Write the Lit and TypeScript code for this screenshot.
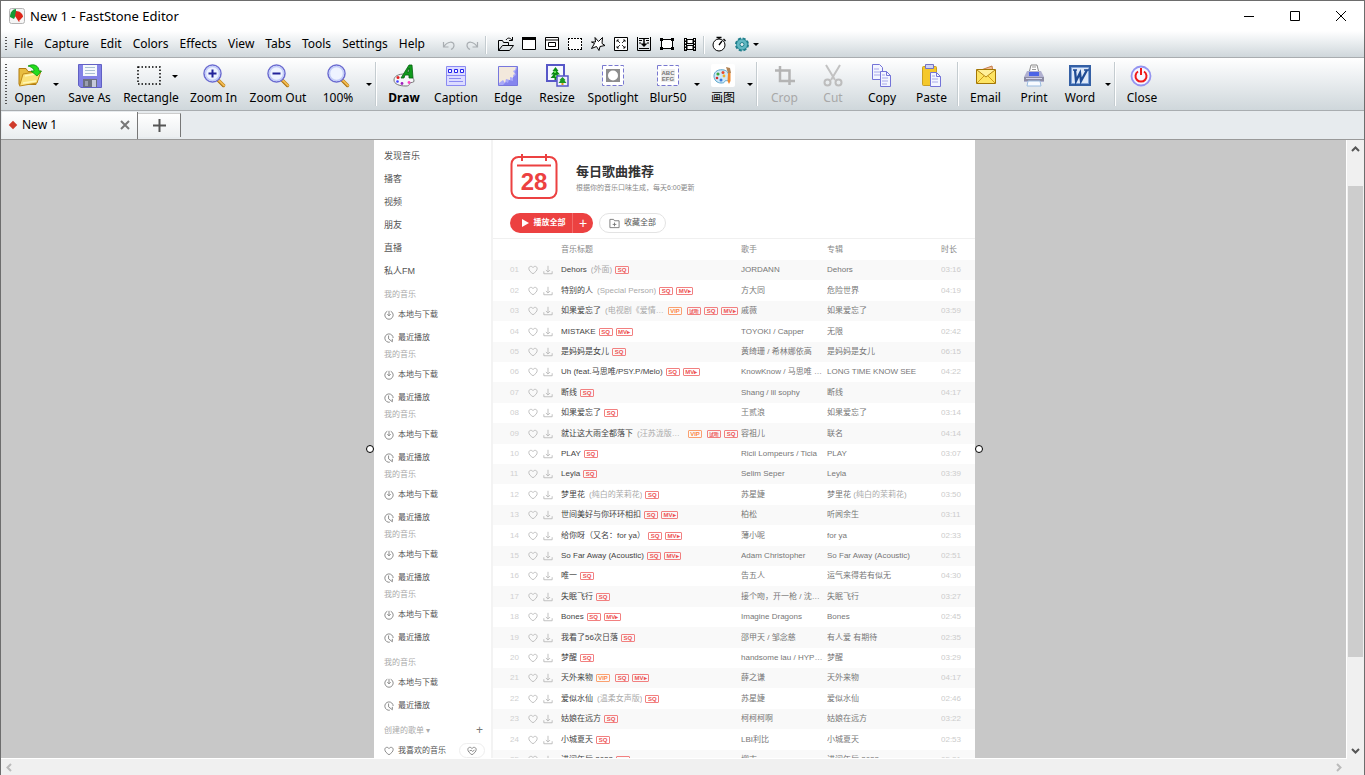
import { LitElement, html, css, svg, nothing } from "lit";
import { customElement } from "lit/decorators.js";
import { styleMap } from "lit/directives/style-map.js";

const lens = svg`
  <path d="M16.500 16.500l5 5" stroke="#a8700f" stroke-width="3.500" stroke-linecap="round"/>
  <path d="M17 16.500l5 5" stroke="#f3bb52" stroke-width="2" stroke-linecap="round"/>
  <circle cx="10.500" cy="9.500" r="8.500" fill="#eef3ff" stroke="#6a6ad0" stroke-width="1.500"/>
  <circle cx="10.500" cy="9.500" r="7" fill="none" stroke="#c3cdf8" stroke-width="1.500"/>`;

const big: Record<string, unknown> = {
  open: svg`
    <path d="M1 4.500h7l2 3h8v13H1z" fill="#e8bd40" stroke="#b07a10"/>
    <path d="M5 10l18-3-4 12L1.500 22z" fill="#fbe278" stroke="#c08a18"/>
    <path d="M5 19l13-2M7 12l13-2.500" stroke="#fff6b8" stroke-width="1.500"/>
    <path d="M10 2c6-3 11 0 11 5h2.500L19 12l-6-5h3c0-2-2-4-6-5z" fill="#23dd1d" stroke="#0c8f0c" stroke-width=".8"/>`,
  save: svg`
    <path d="M.500.500h23v23H3l-2.500-2z" fill="#8282e6" stroke="#6060c4"/>
    <path d="M5 1h14v11H5z" fill="#f4f8fb"/><path d="M7 3.500h10M7 6.500h10M7 9.500h10" stroke="#a9c0d2"/>
    <path d="M5 15h14v8H5z" fill="#6c707e"/><path d="M14 16h4v7h-4z" fill="#c6c9da"/><path d="M7 17h3v5H7z" fill="#9a9eb0"/>`,
  rect: svg`<path d="M1 3h22v17H1z" fill="none" stroke="#000" stroke-width="1.500" stroke-dasharray="1.500 2"/>`,
  zoomin: svg`${lens}<path d="M10.500 5.500v8M6.500 9.500h8" stroke="#23239a" stroke-width="2"/>`,
  zoomout: svg`${lens}<path d="M6.500 9.500h8" stroke="#23239a" stroke-width="2"/>`,
  zoom: lens,
  draw: svg`
    <path d="M2 16c0-4 5-6 10-6s10 3 10 7c0 2-3 1-4 2s0 3-4 3C7 22 2 20 2 16z" fill="#f6f6fa" stroke="#777" stroke-width="1"/>
    <circle cx="6" cy="13.500" r="1.500" fill="#e52020"/><circle cx="5.500" cy="17.500" r="1.300" fill="#4040ff"/><circle cx="10" cy="19.500" r="1.400" fill="#a020c0"/><circle cx="17" cy="18.500" r="1.400" fill="#ff40c0"/>
    <path d="M9 14L17 1h3l1 13h-4v-3h-4l-1 3zM15 8h2V4z" fill="#0f9a1c" stroke="#056010" stroke-width=".8"/>`,
  caption: svg`
    <path d="M2.500 2.500h19v19h-19z" fill="#dcdcff" stroke="#8a8af2"/>
    <path d="M4.500 5.500h3v3h-3zM10.500 5.500h3v3h-3zM16.500 5.500h3v3h-3z" fill="#fff" stroke="#2222ee"/>
    <path d="M2 11.500h20M5 14.500h12M5 17.500h14" stroke="#8a8af2"/>`,
  edge: svg`
    <path d="M2.500 2.500h19v19h-19z" fill="#a9a9f8" stroke="#7777dd"/>
    <path d="M3 3h17l-1 3-2 1 2 3-2 1 1 3-4-1 0 3-4-1-1 4-2-3-4 3z" fill="#f3e9dc"/>
    <path d="M21 4v17H7l3-3 2 1 1-3 4 1v-4l3-2-1-3z" fill="#8585ee"/>`,
  resize: svg`
    <path d="M2 1h17v16H2z" fill="#f5f8ff" stroke="#5757c8" stroke-width="2"/>
    <path d="M10.500 3l3 4h-1.500l3 3.500h-2.500l3 3.500h-4v2h-2v-2h-4l3-3.500H6L9 7H7.500z" fill="#0c8a16"/><path d="M9 7h2v2H9zM10 11h2v2h-2z" fill="#5fe04c"/>
    <path d="M12 12h11v10H12z" fill="#eef" stroke="#5757c8" stroke-width="1.500"/><path d="M17.500 13l3 3-1 .5 2 2.500h-8l2-2.500-1-.5z" fill="#1b9a22"/><path d="M16.500 19h2v2h-2z" fill="#d99a18"/>`,
  spotlight: svg`
    <path d="M1.500 1.500h21v20h-21z" fill="#fff" stroke="#7878d0" stroke-dasharray="4 2"/>
    <path d="M5 5h14v13H5z" fill="#8d8d8d"/><circle cx="12" cy="11.500" r="5" fill="#fff"/>`,
  blur: svg`
    <path d="M1.500 1.500h21v20h-21z" fill="#fff" stroke="#7878d0" stroke-dasharray="4 2"/>
    <path d="M5 5h14v13H5z" fill="#eee"/>
    <text class="abc" x="12" y="11">ABC</text><text class="abc" x="12" y="17">EFG</text>`,
  paint: svg`
    <rect width="24" height="23" rx="2" fill="#fff"/>
    <path d="M3 12c0-5 5-7 10-6 4 1 5 4 5 8s-3 2-4 3 0 2-4 2c-4 0-7-3-7-7z" fill="#cfe9f7" stroke="#5aa5cc"/>
    <circle cx="7" cy="10" r="1.600" fill="#3ba53f"/><circle cx="12" cy="8.500" r="1.500" fill="#e84b2d"/><circle cx="6" cy="14" r="1.300" fill="#d03030"/><circle cx="10" cy="16" r="1.500" fill="#3878d8"/><circle cx="13" cy="12" r="1.400" fill="#f1b32a"/>
    <path d="M17 9h2.500v8L18 20l-1.500-3z" fill="#f0872b"/><path d="M15 3l4 1 1 5h-3z" fill="#b18354"/>`,
  crop: svg`<path d="M7 2v15h15M2 6.500h14.500V21" fill="none" stroke="#b4b4b4" stroke-width="2.500"/>`,
  cut: svg`
    <path d="M5 1l9 15M19 1l-9 15" stroke="#c2c2c2" stroke-width="2"/>
    <circle cx="6.500" cy="18.500" r="3" fill="none" stroke="#bdbdbd" stroke-width="2"/><circle cx="17.500" cy="18.500" r="3" fill="none" stroke="#bdbdbd" stroke-width="2"/>`,
  copy: svg`
    <path d="M2.500.500h7l3 3v12h-10z" fill="#f3f5ff" stroke="#7474d8"/><path d="M4 5h5M4 8h7M4 11h7" stroke="#a9a9ea"/>
    <path d="M10.500 7.500h6l4 4v11h-10z" fill="#f3f5ff" stroke="#7474d8"/><path d="M16.500 7.500v4h4" fill="none" stroke="#7474d8"/><path d="M12 11h3M12 14h6M12 17h6M12 20h5" stroke="#a9a9ea"/>`,
  paste: svg`
    <rect x="2.500" y="2.500" width="14" height="19" rx="1" fill="#f5c82a" stroke="#c99f22"/><path d="M5.500.500h8v4h-8z" fill="#cfd3f5" stroke="#7373c6"/>
    <path d="M10.500 8.500h6l4 4v10h-10z" fill="#f3f5ff" stroke="#7474d8"/><path d="M16.500 8.500v4h4" fill="none" stroke="#7474d8"/><path d="M12 12h3M12 15h6M12 18h6" stroke="#a9a9ea"/>`,
  email: svg`
    <path d="M7 6l11-4 1 6z" fill="#f0bd96" stroke="#c77d4a"/>
    <path d="M2.500 5.500h19v14h-19z" fill="#fde463" stroke="#a37605"/>
    <path d="M3 19l7-7M21 19l-7-7" stroke="#d09c18"/><path d="M3 6l9 7 9-7" fill="#fff09a" stroke="#b58612"/>`,
  print: svg`
    <path d="M7 9l2-8h6l2 8z" fill="#fff" stroke="#888"/><path d="M10 3h4M10 5.500h4" stroke="#999"/>
    <path d="M5 7h14l3 6v5H2v-5z" fill="#b0b0d0"/><path d="M7 8h10v4H7z" fill="#4c64e6"/><path d="M2 13h20v4H2z" fill="#8c8ca4"/>
    <path d="M4 14.500h16" stroke="#d6d6ee"/><path d="M6 17h12l1 5H5z" fill="#f8fbff" stroke="#9bbce0"/>`,
  word: svg`
    <path d="M1 1h22v21H1z" fill="#3460a5"/><path d="M3.500 3.500h17v16h-17z" fill="#dfe9f8" stroke="#7fa2d8"/>
    <path d="M7 6l1 11 4-8 1 8 6-11" fill="none" stroke="#1f4b94" stroke-width="2.300"/><path d="M5 6h4M16 6h5" stroke="#1f4b94" stroke-width="1.500"/>`,
  close: svg`
    <circle cx="11" cy="12" r="9.500" fill="#f6f6ff" stroke="#9494f0" stroke-width="1.800"/>
    <path d="M8 7.500a5.500 5.500 0 1 0 6 0" fill="none" stroke="#f01818" stroke-width="2"/><path d="M11 4v7" stroke="#f01818" stroke-width="2"/>`,
};

const small: Record<string, unknown> = {
  undo: svg`<path d="M2.500 6v5h5M3 10.500c3-5 10-6 10-1 0 2-1 3-3 4" fill="none" stroke="#a9aeb2" stroke-width="1.200"/>`,
  redo: svg`<path d="M13.500 6v5h-5M13 10.500c-3-5-10-6-10-1 0 2 1 3 3 4" fill="none" stroke="#a9aeb2" stroke-width="1.200"/>`,
  folder: svg`<path d="M.500 14.500v-10h4l1 2h5v3M.500 14.500l4-5h11l-4 5zM8 4c2-3 4-2 6 0M14.500 1v3.500H11" fill="none" stroke="#000"/>`,
  window: svg`<path d="M1.500 1.500h13v12h-13z" fill="#fff" stroke="#000"/><path d="M1 2.500h14" stroke="#000" stroke-width="3"/>`,
  object: svg`<path d="M1.500 1.500h13v12h-13z" fill="#fff" stroke="#000"/><path d="M1 4h14" stroke="#000"/><path d="M4.500 6.500h7v4h-7z" fill="#fff" stroke="#000"/>`,
  region: svg`<path d="M1 2h14v12H1z" fill="#fff"/><path d="M1 2.500h14M1 13.500h14M1.500 2v12M14.500 2v12" stroke="#000" stroke-dasharray="2 1"/>`,
  star: svg`<path d="M5 1.500l3.500 4 4-4-.5 6 3 2-5 1-1 4-2.500-4-5 2 3-5-3-1.500h4z" fill="#fff" stroke="#000"/>`,
  full: svg`<path d="M1.500 1.500h13v13h-13z" fill="#fff" stroke="#000"/><path d="M4 6V4h2M10 4h2v2M12 10v2h-2M6 12H4v-2M4 4l3 3M12 4L9 7M12 12L9 9M4 12l3-3" fill="none" stroke="#000" stroke-width=".8"/>`,
  scroll: svg`<path d="M1.500 1v13.500h13V1" fill="none" stroke="#000"/><path d="M3 2.500h10M3 4.500h3M10 4.500h3M3 7h2M11 7h2M3 12.500h10" stroke="#000"/><path d="M8 3v5" stroke="#000" stroke-width="1.500"/><path d="M4.500 7.500h7L8 11z"/>`,
  fixed: svg`<path d="M2.500 3.500h11v9h-11z" fill="#fff" stroke="#000"/><path d="M1 2h3v3H1zM12 2h3v3h-3zM1 11h3v3H1zM12 11h3v3h-3z"/>`,
  film: svg`<path d="M2 2h3v13H2zM11 2h3v13h-3z"/><path d="M5 3.500h6v4H5zM5 9.500h6v4H5z" fill="#fff" stroke="#000"/><path d="M3.500 3v12M12.500 3v12" stroke="#fff" stroke-dasharray="1.500 1.500"/>`,
  timer: svg`<circle cx="8" cy="9" r="6" fill="#fff" stroke="#000"/><path d="M8 9l3-4M5.500 1.500h5M8 1v2M12.500 3l2 2" stroke="#000" stroke-width="1.300"/>`,
  gear: svg`<circle cx="8" cy="8.500" r="6" fill="#3f9ba8" stroke="#1f7f8c" stroke-width="2" stroke-dasharray="3 1.700"/><circle cx="8" cy="8.500" r="5" fill="#62b8c2"/><circle cx="8" cy="8.500" r="2" fill="#e6eef0" stroke="#1f7f8c"/>`,
};

const icon = (art: unknown, cls: string, box: string) =>
  html`<svg class=${cls} viewBox=${box} aria-hidden="true" fill="currentColor">${art}</svg>`;

const heart = svg`<path d="M6 10.500C3 8.500 1 6.500 1 4.200 1 1.300 4.500.700 6 3 7.500.700 11 1.300 11 4.200c0 2.300-2 4.300-5 6.300z" fill="none" stroke="currentColor"/>`;
const load = svg`<path d="M6 1v7M3.500 6L6 8.500 8.500 6M1 7.500v3h10v-3" fill="none" stroke="currentColor"/>`;
const local = svg`<path d="M4 1.500a5 5 0 1 0 4 0M6 1v6M4 5l2 2 2-2" fill="none" stroke="currentColor"/>`;
const recent = svg`<path d="M7 11a5 5 0 1 1 4-5M5.500 3v4l4.500 3.500V7" fill="none" stroke="currentColor"/>`;
const beat = svg`<path d="M3 6l2-1 1.500 1.500L9 5" fill="none" stroke="currentColor"/>`;

interface Tool { id: string; label: string; w: number; off?: boolean; strong?: boolean; drop?: boolean; inner?: boolean; sep?: boolean }
const tools: Tool[] = [
  { id: "open", label: "Open", w: 40, drop: true },
  { id: "save", label: "Save As", w: 57 },
  { id: "rect", label: "Rectangle", w: 66, inner: true },
  { id: "zoomin", label: "Zoom In", w: 59 },
  { id: "zoomout", label: "Zoom Out", w: 70 },
  { id: "zoom", label: "100%", w: 50, drop: true, sep: true },
  { id: "draw", label: "Draw", w: 50, strong: true },
  { id: "caption", label: "Caption", w: 54 },
  { id: "edge", label: "Edge", w: 50 },
  { id: "resize", label: "Resize", w: 48 },
  { id: "spotlight", label: "Spotlight", w: 64 },
  { id: "blur", label: "Blur50", w: 46, drop: true },
  { id: "paint", label: "画图", w: 42, drop: true, sep: true },
  { id: "crop", label: "Crop", w: 49, off: true },
  { id: "cut", label: "Cut", w: 48, off: true },
  { id: "copy", label: "Copy", w: 50 },
  { id: "paste", label: "Paste", w: 49, sep: true },
  { id: "email", label: "Email", w: 49 },
  { id: "print", label: "Print", w: 48 },
  { id: "word", label: "Word", w: 44, drop: true, sep: true },
  { id: "close", label: "Close", w: 48 },
];

type Song = [title: string, note: string, tags: string, artist: string, album: string, time: string, albumNote?: string];
const songs: Song[] = [
  ["Dehors", "(外面)", "SQ", "JORDANN", "Dehors", "03:16"],
  ["特别的人", "(Special Person)", "SQ MV", "方大同", "危险世界", "04:19"],
  ["如果爱忘了", "(电视剧《爱情是从告白开始的》片尾曲)", "VIP 试听 SQ MV", "戚薇", "如果爱忘了", "03:59"],
  ["MISTAKE", "", "SQ MV", "TOYOKI / Capper", "无限", "02:42"],
  ["是妈妈是女儿", "", "SQ", "黄绮珊 / 希林娜依高", "是妈妈是女儿", "06:15"],
  ["Uh (feat.马思唯/PSY.P/Melo)", "", "SQ MV", "KnowKnow / 马思唯 /…", "LONG TIME KNOW SEE", "04:22"],
  ["断线", "", "SQ", "Shang / lil sophy", "断线", "04:17"],
  ["如果爱忘了", "", "SQ", "王贰浪", "如果爱忘了", "03:14"],
  ["就让这大雨全都落下", "(汪苏泷版翻唱合集)", "VIP 试听 SQ", "容祖儿", "联名", "04:14"],
  ["PLAY", "", "SQ", "Ricii Lompeurs / Ticia", "PLAY", "03:07"],
  ["Leyla", "", "SQ", "Selim Seper", "Leyla", "03:39"],
  ["梦里花", "(纯白的茉莉花)", "SQ", "苏星婕", "梦里花", "03:50", "(纯白的茉莉花)"],
  ["世间美好与你环环相扣", "", "SQ MV", "柏松", "听闻余生", "03:11"],
  ["给你呀（又名：for ya）", "", "SQ MV", "薄小呢", "for ya", "02:33"],
  ["So Far Away (Acoustic)", "", "SQ MV", "Adam Christopher", "So Far Away (Acoustic)", "02:51"],
  ["唯一", "", "SQ", "告五人", "运气来得若有似无", "04:30"],
  ["失眠飞行", "", "SQ", "接个吻，开一枪 / 沈以诚", "失眠飞行", "03:27"],
  ["Bones", "", "SQ MV", "Imagine Dragons", "Bones", "02:45"],
  ["我看了56次日落", "", "SQ", "邵甲天 / 邹念慈", "有人爱 有期待", "02:35"],
  ["梦醒", "", "SQ", "handsome lau / HYPER", "梦醒", "03:29"],
  ["天外来物", "", "VIP SQ MV", "薛之谦", "天外来物", "04:17"],
  ["爱似水仙", "(温柔女声版)", "SQ", "苏星婕", "爱似水仙", "02:46"],
  ["姑娘在远方", "", "SQ", "柯柯柯啊", "姑娘在远方", "03:22"],
  ["小城夏天", "", "SQ", "LBI利比", "小城夏天", "02:53"],
  ["进阅年后 2022", "", "SQ", "柳吉", "进阅年后 2022", "05:21"],
];

@customElement("music-page")
class MusicPage extends LitElement {
  static styles = css`
    :host { display: grid; grid-template-columns: 117px 1fr; background: #fff; color: #555;
      font: 8px/12px "Liberation Sans", "Noto Sans CJK SC", sans-serif; }
    * { box-sizing: border-box; }
    button { font: inherit; color: inherit; border: 0; background: none; padding: 0; }
    a { color: inherit; text-decoration: none; }
    aside { padding: 4px 6px 0 10px; display: flex; flex-direction: column; }
    .nav { display: flex; flex-direction: column; font-size: 9px; margin-bottom: 7px; }
    .nav a, .item { display: flex; align-items: center; height: 23px; }
    .item { gap: 4px; }
    .head { height: 14px; line-height: 12px; color: #aaa; display: flex; justify-content: space-between; font-weight: normal; margin: 0; font-size: 8px; }
    .later { margin-top: 8px; }
    .plus { font-size: 12px; line-height: 10px; height: 10px; color: #777; padding-right: 2px; }
    .side { width: 10px; height: 10px; color: #777; }
    .beat { width: 26px; height: 15px; flex: none; margin-left: auto; border: 1px solid #eee; border-radius: 8px; display: grid; place-items: center; }
    main { border-left: 2px solid #f3f3f3; min-width: 0; }
    header { display: flex; gap: 18px; padding: 13px 17px 0; }
    .cal { width: 48px; height: 47px; color: #ec4141; }
    .cal text { font: bold 24px "Liberation Sans", sans-serif; text-anchor: middle; }
    h1 { font-size: 13px; line-height: 18px; margin: 10px 0 0; color: #333; }
    p { font-size: 7px; line-height: 14px; margin: 0; color: #888; }
    .acts { display: flex; gap: 6px; padding: 13px 17px 5px; border-bottom: 1px solid #f0f0f0; }
    .red { display: flex; height: 20px; border-radius: 10px; background: #ec4141; color: #fff; font-weight: bold; overflow: hidden; }
    .play { width: 62px; display: flex; align-items: center; justify-content: center; gap: 5px; padding-left: 5px; }
    .play svg { width: 7px; height: 8px; }
    .red .add { width: 21px; border-left: 1px solid #f36a6a; font: 14px/18px "Liberation Sans", sans-serif; }
    .keep { width: 67px; height: 20px; border: 1px solid #e3e3e3; border-radius: 10px; display: flex; align-items: center; justify-content: center; gap: 4px; }
    .keep svg { width: 11px; height: 11px; color: #777; }
    table { width: 100%; table-layout: fixed; border-collapse: collapse; }
    .c1 { width: 34px; } .c2 { width: 12px; } .c3 { width: 17px; } .c4 { width: 185px; } .c5 { width: 86px; } .c7 { width: 34px; }
    th { font-weight: normal; color: #888; text-align: left; height: 21px; padding: 0; }
    th.song { padding-left: 5px; }
    td { padding: 0; height: 20px; color: #777; line-height: 12px; white-space: nowrap; overflow: hidden; text-overflow: ellipsis; }
    tr:nth-child(5n + 2) td, tr:nth-child(5n + 4) td { height: 21px; }
    tr:nth-child(odd) td { background: #f9f9f9; }
    td.num { padding-left: 17px; color: #d0d0d0; }
    td.time { color: #ccc; }
    td.artist { padding-right: 3px; }
    td.mark { text-align: center; color: #b5b5b5; line-height: 0; }
    .mark svg { width: 10px; height: 10px; }
    .line { display: flex; align-items: center; gap: 3px; padding: 0 3px 0 5px; color: #444; }
    .note { color: #aaa; overflow: hidden; text-overflow: ellipsis; margin-left: 1px; }
    .album .note { margin-left: 0; }
    .tag { flex: none; width: 14px; height: 8px; border: 1px solid #f28080; border-radius: 1px; color: #ee5555; font-size: 6px; line-height: 6px; text-align: center; font-weight: bold; }
    .tag.mv { width: 17px; }
    .tag.vip { border-color: #fba070; color: #fe8a48; margin-right: 2px; }
    .tag.try { font-size: 5px; }
  `;

  group(later = false) {
    return html`<h2 class="head ${later ? "later" : ""}">我的音乐</h2>
      <a class="item" href="#local">${icon(local, "side", "0 0 12 12")}本地与下载</a>
      <a class="item" href="#recent">${icon(recent, "side", "0 0 12 12")}最近播放</a>`;
  }

  tag(t: string) {
    const kind = ({ MV: "mv", VIP: "vip", 试听: "try" } as Record<string, string>)[t] ?? "";
    return html`<span class="tag ${kind}">${t === "MV" ? "MV▸" : t}</span>`;
  }

  render() {
    return html`
      <aside>
        <nav class="nav">${["发现音乐", "播客", "视频", "朋友", "直播", "私人FM"].map((t) => html`<a href="#nav">${t}</a>`)}</nav>
        ${[0, 1, 2, 3, 4, 5].map(() => this.group())}
        ${this.group(true)}
        <h2 class="head later"><span>创建的歌单 ▾</span><button class="plus" aria-label="新建歌单">+</button></h2>
        <a class="item" href="#liked">${icon(heart, "side", "0 0 12 12")}我喜欢的音乐
          <span class="beat">${icon([heart, beat], "side", "0 0 12 12")}</span></a>
      </aside>
      <main>
        <header>
          ${icon(svg`<rect x="1.500" y="4" width="45" height="41" rx="7" fill="none" stroke="currentColor" stroke-width="2"/>
            <path d="M12 1v7M36 1v7M7 12.500h34" stroke="currentColor" stroke-width="2"/><text x="24" y="37">28</text>`, "cal", "0 0 48 47")}
          <div><h1>每日歌曲推荐</h1><p>根据你的音乐口味生成，每天6:00更新</p></div>
        </header>
        <div class="acts">
          <div class="red"><button class="play"><svg viewBox="0 0 7 8" fill="currentColor" aria-hidden="true"><path d="M0 0l7 4-7 4z"/></svg>播放全部</button><button class="add" aria-label="添加">+</button></div>
          <button class="keep">${icon(svg`<path d="M1 10.500V1.500h4l1 1.500h5v7.500zM6 5v4M4 7h4" fill="none" stroke="currentColor"/>`, "", "0 0 12 12")}收藏全部</button>
        </div>
        <table>
          <colgroup><col class="c1"><col class="c2"><col class="c3"><col class="c4"><col class="c5"><col><col class="c7"></colgroup>
          <thead><tr><th></th><th></th><th></th><th class="song">音乐标题</th><th>歌手</th><th>专辑</th><th>时长</th></tr></thead>
          <tbody>${songs.map(([title, note, tags, artist, album, time, extra], i) => html`<tr>
            <td class="num">${String(i + 1).padStart(2, "0")}</td>
            <td class="mark">${icon(heart, "", "0 0 12 12")}</td>
            <td class="mark">${icon(load, "", "0 0 12 12")}</td>
            <td><div class="line"><span>${title}</span>${note ? html`<span class="note">${note}</span>` : nothing}${tags.split(" ").map((t) => this.tag(t))}</div></td>
            <td class="artist">${artist}</td>
            <td class="album">${album} ${extra ? html`<span class="note">${extra}</span>` : nothing}</td>
            <td class="time">${time}</td></tr>`)}</tbody>
        </table>
      </main>`;
  }
}

@customElement("app-root")
class AppRoot extends LitElement {
  static styles = css`
    :host { display: flex; flex-direction: column; height: 100vh; box-sizing: border-box; overflow: hidden;
      border: 1px solid #6d6d6d; border-bottom: 0; background: #f0f0f0; color: #000;
      font: 12px/16px "Noto Sans", "Noto Sans CJK SC", sans-serif; }
    * { box-sizing: border-box; }
    button { font: inherit; color: inherit; border: 0; background: none; padding: 0; }
    .title { height: 30px; flex: none; background: #fff; display: flex; align-items: center; padding-left: 8px; }
    .logo { width: 16px; height: 16px; }
    h1 { font: inherit; font-size: 13px; margin: 0 0 0 5px; flex: 1; }
    .win { width: 46px; height: 30px; display: grid; place-items: center; }
    .win svg { width: 12px; height: 12px; }
    .bar { flex: none; display: flex; background: linear-gradient(#fff, #eef1f3 35%, #cfd7db); border-bottom: 1px solid #a9adb0; padding: 0 0 0 4px; }
    .grip { width: 2px; margin: 6px 2px 6px 0; background: repeating-linear-gradient(#555 0 1px, transparent 1px 3px); }
    .menubar { height: 27px; align-items: stretch; }
    .menu { display: flex; width: 428px; }
    .menu button { padding: 0 6px 0 5px; }
    .ic { width: 23px; display: grid; place-items: center; }
    .ic svg { width: 16px; height: 16px; }
    .sep { width: 2px; background: linear-gradient(90deg, #c4ccd0 50%, #fff 50%); flex: none; }
    .menubar .sep { margin: 5px 2px 3px; }
    .quick { display: flex; margin-left: 5px; }
    .menubar .drop { justify-items: start; }
    .caret { border: 3px solid transparent; border-top-color: #000; border-bottom: 0; }
    .toolbar { height: 53px; }
    .toolbar .grip { margin-right: 3px; }
    .tool { height: 50px; display: flex; flex-direction: column; align-items: center; padding-top: 6px; gap: 2px; flex: none; }
    .art { display: flex; align-items: center; gap: 11px; }
    .big { width: 24px; height: 24px; }
    .strong { font-weight: bold; }
    .off { color: #a8a8a8; }
    .abc { font: bold 6px "Liberation Sans", sans-serif; text-anchor: middle; fill: #777; }
    .drop { width: 11px; display: grid; place-items: center; }
    .toolbar .sep { margin: 4px 2px 4px 1px; }
    .inner { padding-left: 12px; }
    .tabs { height: 29px; flex: none; background: #e7ebee; border-bottom: 1px solid #999; display: flex; align-items: flex-start; padding: 1px 0 0 1px; }
    .tab { width: 136px; height: 27px; display: flex; align-items: center; padding: 0 6px 2px 8px; gap: 6px; background: linear-gradient(#fff, #e9edef); border-right: 1px solid #777; }
    .dot { width: 6px; height: 6px; background: #cf3a2a; transform: rotate(45deg); }
    .name { flex: 1; }
    .x, .x svg { width: 12px; height: 12px; }
    .x { display: grid; }
    .new { width: 43px; height: 24px; margin-top: 1px; background: linear-gradient(#fff, #eceff1); border-right: 1px solid #777; border-top: 1px solid #ccc; display: grid; place-items: center; }
    .new svg { width: 13px; height: 13px; }
    .view { flex: 1; min-height: 0; display: grid; grid-template: minmax(0, 1fr) 16px / minmax(0, 1fr) 17px; }
    .canvas { background: #c8c8c8; display: flex; justify-content: center; overflow: hidden; border-right: 1px solid #fff; border-bottom: 1px solid #fff; padding-left: 2px; }
    .doc { position: relative; width: 601px; }
    .page { height: 100%; overflow: hidden; }
    .knob { position: absolute; width: 8px; height: 8px; margin-top: -4px; border: 1px solid #000; border-radius: 50%; background: #fff; top: 50%; }
    .left { right: 100%; } .right { left: 100%; }
    .vs { display: grid; grid-template-rows: 18px 28fr 471fr 84fr 18px; padding: 0 1px; }
    .vs svg, .hs svg { width: 9px; height: 9px; place-self: center; fill: none; stroke: #555; stroke-width: 2; }
    .thumb { background: #cdcdcd; grid-row: 3; }
    .last { grid-row: 5; }
    .hs { display: flex; justify-content: space-between; align-items: center; padding: 0 4px; }
    .hs svg { stroke: #bbb; }
  `;

  tool(t: Tool) {
    return html`<button class="tool ${t.off ? "off" : ""} ${t.strong ? "strong" : ""}" ?disabled=${t.off} style=${styleMap({ width: `${t.w}px` })}>
        <span class="art ${t.inner ? "inner" : ""}">${icon(big[t.id], "big", "0 0 24 24")}${t.inner ? html`<i class="caret"></i>` : nothing}</span>
        <span>${t.label}</span></button>
      ${t.drop ? html`<button class="drop" aria-label="${t.label} options"><i class="caret"></i></button>` : nothing}
      ${t.sep ? html`<i class="sep"></i>` : nothing}`;
  }

  render() {
    const quick = (id: string) => html`<button class="ic" aria-label=${id}>${icon(small[id], "", "0 0 16 16")}</button>`;
    const win = (label: string, d: string) => html`<button class="win" aria-label=${label}><svg viewBox="0 0 12 12" fill="none" stroke="#000"><path d=${d}/></svg></button>`;
    return html`
      <div class="title">
        <svg class="logo" viewBox="0 0 16 16" aria-hidden="true"><rect x=".5" y=".5" width="15" height="15" rx="2" fill="#f4f4f4" stroke="#b5b5b5"/>
          <path d="M1 9c0-5 3-8 6-8l0 6-2 4z" fill="#159a36"/><path d="M7 3c4 0 7 3 7 6l-4 5-4-6z" fill="#dd2518"/><path d="M10 13l4-4v5z" fill="#f8f8f8"/></svg>
        <h1>New 1 - FastStone Editor</h1>
        ${win("Minimize", "M1 6.500h10")}${win("Maximize", "M1.500 1.500h9v9h-9z")}${win("Close", "M1 1l10 10M11 1L1 11")}
      </div>
      <div class="bar menubar"><i class="grip"></i>
        <nav class="menu">${["File", "Capture", "Edit", "Colors", "Effects", "View", "Tabs", "Tools", "Settings", "Help"].map((m) => html`<button>${m}</button>`)}</nav>
        ${["undo", "redo"].map(quick)}<i class="sep"></i>
        <div class="quick">${["folder", "window", "object", "region", "star", "full", "scroll", "fixed", "film"].map(quick)}</div><i class="sep"></i>
        ${["timer", "gear"].map(quick)}<button class="drop" aria-label="Options"><i class="caret"></i></button>
      </div>
      <div class="bar toolbar"><i class="grip"></i>${tools.map((t) => this.tool(t))}</div>
      <div class="tabs">
        <div class="tab"><i class="dot"></i><span class="name">New 1</span>
          <button class="x" aria-label="Close tab"><svg viewBox="0 0 12 12" stroke="#777" stroke-width="2"><path d="M2 2l8 8M10 2l-8 8"/></svg></button></div>
        <button class="new" aria-label="New tab"><svg viewBox="0 0 13 13" stroke="#555" stroke-width="2"><path d="M6.500 0v13M0 6.500h13"/></svg></button>
      </div>
      <div class="view">
        <div class="canvas"><div class="doc"><div class="page"><music-page></music-page></div><i class="knob left"></i><i class="knob right"></i></div></div>
        <div class="vs"><svg viewBox="0 0 9 9"><path d="M1 6l3.500-3.500L8 6"/></svg><i class="thumb"></i><svg class="last" viewBox="0 0 9 9"><path d="M1 3l3.500 3.500L8 3"/></svg></div>
        <div class="hs"><svg viewBox="0 0 9 9"><path d="M6 1L2.500 4.500 6 8"/></svg><svg viewBox="0 0 9 9"><path d="M3 1l3.500 3.500L3 8"/></svg></div>
      </div>`;
  }
}
